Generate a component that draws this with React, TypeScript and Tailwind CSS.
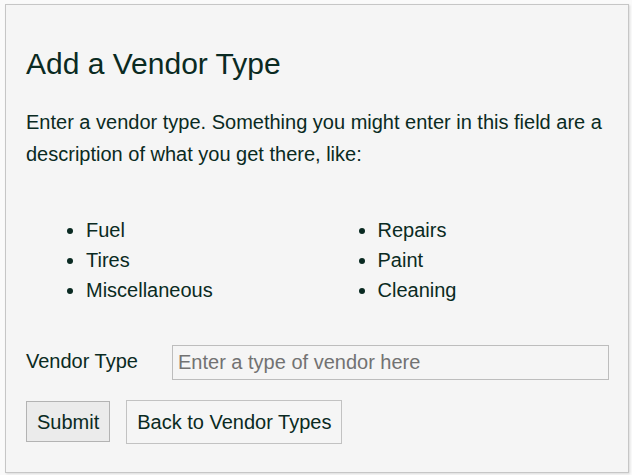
export default function App() {
  const left = ["Fuel", "Tires", "Miscellaneous"];
  const right = ["Repairs", "Paint", "Cleaning"];

  return (
    <div
      className="w-[632px] h-[475px] bg-[#fafafa] pt-[4px] pl-[5px]"
      style={{ fontFamily: '"Liberation Sans", Arial, sans-serif' }}
    >
      <div className="w-[624px] h-[469px] border border-[#c6c6c6] bg-[#f5f5f5] shadow-[1px_1px_2px_rgba(0,0,0,0.12)] pt-[41px] pl-[20px] pr-[19px] text-[#0a2a22]">
        <h2 className="text-[30px] leading-[35px]">Add a Vendor Type</h2>
        <p className="mt-[25px] text-[20px] leading-[32px]">
          Enter a vendor type. Something you might enter in this field are a
          description of what you get there, like:
        </p>

        <div className="mt-[45px] grid grid-cols-2 text-[20px] leading-[30px]">
          <ul className="list-disc pl-[60px]">
            {left.map((item) => (
              <li key={item}>{item}</li>
            ))}
          </ul>
          <ul className="list-disc pl-[60px]">
            {right.map((item) => (
              <li key={item}>{item}</li>
            ))}
          </ul>
        </div>

        <div className="mt-[40px] flex items-center text-[20px]">
          <label className="w-[146px] leading-[30px] -mt-[3px]">Vendor Type</label>
          <input
            type="text"
            placeholder="Enter a type of vendor here"
            className="flex-1 h-[35px] border border-[#bdbdbd] bg-[#f5f5f5] px-[5px] text-[20px] placeholder:text-[#727272] outline-none"
          />
        </div>

        <div className="mt-[20px] flex items-start gap-[16px] text-[20px]">
          <button className="mt-[1px] h-[41px] px-[10px] border border-[#b3b3b3] bg-[#ebebeb] text-[#0a2a22]">
            Submit
          </button>
          <a className="h-[44px] px-[10px] border border-[#c2c2c2] bg-[#f5f5f5] flex items-center">
            Back to Vendor Types
          </a>
        </div>
      </div>
    </div>
  );
}
